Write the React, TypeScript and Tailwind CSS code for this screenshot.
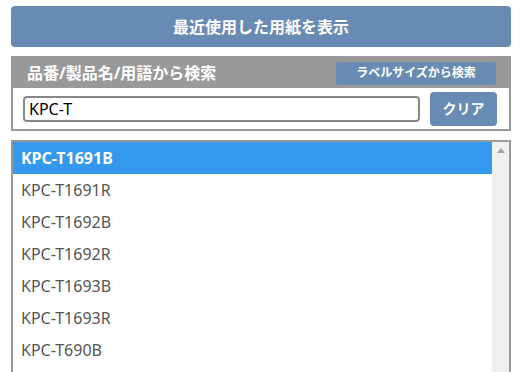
const items = [
  "KPC-T1691B",
  "KPC-T1691R",
  "KPC-T1692B",
  "KPC-T1692R",
  "KPC-T1693B",
  "KPC-T1693R",
  "KPC-T690B",
];

export default function App() {
  return (
    <div
      className="w-[522px] h-[372px] overflow-hidden bg-white px-[11px] pt-[6px]"
      style={{ fontFamily: '"Noto Sans", "Noto Sans CJK JP", sans-serif' }}
    >
      {/* Recent papers */}
      <button className="w-full h-[41px] rounded-[4px] bg-[#688bb4] text-white font-bold text-[16px] leading-none">
        最近使用した用紙を表示
      </button>

      {/* Search panel */}
      <div className="mt-[9px] border-2 border-[#999]">
        <div className="h-[30px] bg-[#999] flex items-center justify-between pl-[14px] pr-[13px]">
          <span className="text-white font-bold text-[16px] leading-none">
            品番/製品名/用語から検索
          </span>
          <button className="w-[160px] h-[23px] rounded-[3px] bg-[#688bb4] text-white font-bold text-[12px] leading-none">
            ラベルサイズから検索
          </button>
        </div>
        <div className="h-[41px] bg-white flex items-center pl-[10px] pr-[12px] gap-[10px]">
          <input
            className="flex-1 h-[26px] border-2 border-[#888] rounded-[4px] px-[4px] text-[16px] text-black outline-none"
            defaultValue="KPC-T"
          />
          <button className="w-[67px] h-[34px] rounded-[4px] bg-[#688bb4] text-white font-bold text-[14px] leading-none">
            クリア
          </button>
        </div>
      </div>

      {/* Result list */}
      <div className="mt-[9px] border-2 border-[#999] flex h-[260px]">
        <ul className="flex-1">
          {items.map((item, i) => (
            <li
              key={item}
              className={
                i === 0
                  ? "h-[32px] flex items-center pl-[8px] bg-[#3399ee] text-white font-bold text-[16px]"
                  : "h-[32px] flex items-center pl-[8px] text-[#555] text-[16px]"
              }
            >
              {item}
            </li>
          ))}
        </ul>
        <div className="w-[17px] bg-[#f0f0f0] flex justify-center pt-[6px]">
          <svg width="8" height="5" viewBox="0 0 8 5">
            <polygon points="4,0 8,5 0,5" fill="#a3a3a3" />
          </svg>
        </div>
      </div>
    </div>
  );
}
